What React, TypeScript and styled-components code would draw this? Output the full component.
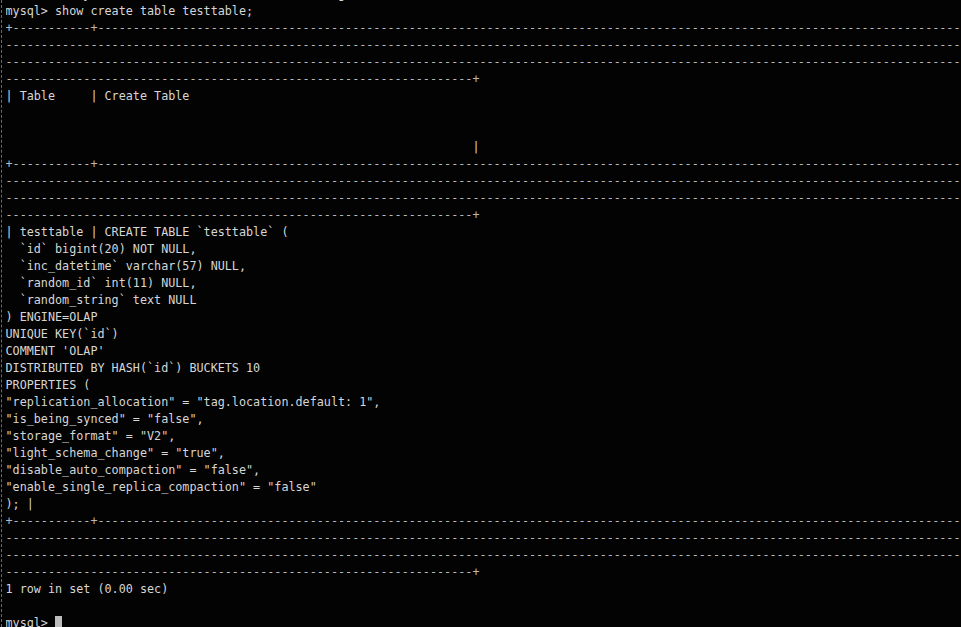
import React from "react";
import styled, { createGlobalStyle } from "styled-components";

const Global = createGlobalStyle`
  html, body {
    margin: 0;
    padding: 0;
    background: #030303;
    overflow: hidden;
  }
  #root {
    width: 961px;
    height: 627px;
    overflow: hidden;
  }
`;

const Screen = styled.div`
  width: 961px;
  height: 627px;
  overflow: hidden;
  background: #030303;
  box-sizing: border-box;
`;

const Frame = styled.div`
  margin-left: 1px;
  border-left: 1px dashed #6a6a6a;
  padding-left: 3.5px;
  height: 100%;
  overflow: hidden;
`;

const Output = styled.pre`
  margin: -14.5px 0 0 0;
  font-family: "DejaVu Sans Mono", "Liberation Mono", monospace;
  font-size: 11.75px;
  line-height: 17.03px;
  color: #d6d6d6;
  white-space: pre;
  overflow: hidden;
`;

const Line = styled.div<{ $dim?: boolean }>`
  height: 17.03px;
  white-space: pre;
  overflow: hidden;
  color: ${(p) => (p.$dim ? "#b9b9b9" : "#d6d6d6")};
`;

const Cursor = styled.span`
  display: inline-block;
  width: 7px;
  height: 14px;
  background: #bdbdbd;
  vertical-align: -3px;
`;

const FULL = "-".repeat(160);
const border = (): string[] => [
  "+-----------+" + "-".repeat(150),
  FULL,
  FULL,
  "-".repeat(66) + "+",
];

const createLines = [
  "| testtable | CREATE TABLE `testtable` (",
  "  `id` bigint(20) NOT NULL,",
  "  `inc_datetime` varchar(57) NULL,",
  "  `random_id` int(11) NULL,",
  "  `random_string` text NULL",
  ") ENGINE=OLAP",
  "UNIQUE KEY(`id`)",
  "COMMENT 'OLAP'",
  "DISTRIBUTED BY HASH(`id`) BUCKETS 10",
  "PROPERTIES (",
  '"replication_allocation" = "tag.location.default: 1",',
  '"is_being_synced" = "false",',
  '"storage_format" = "V2",',
  '"light_schema_change" = "true",',
  '"disable_auto_compaction" = "false",',
  '"enable_single_replica_compaction" = "false"',
  "); |",
];

const lines: { text: string; dim?: boolean }[] = [
  { text: "           y,                   ,              g" },
  { text: "mysql> show create table testtable;" },
  ...border().map((t) => ({ text: t, dim: true })),
  { text: "| Table     | Create Table" },
  { text: "" },
  { text: "" },
  { text: " ".repeat(66) + "|" },
  ...border().map((t) => ({ text: t, dim: true })),
  ...createLines.map((t) => ({ text: t })),
  ...border().map((t) => ({ text: t, dim: true })),
  { text: "1 row in set (0.00 sec)" },
  { text: "" },
];

export default function App() {
  return (
    <Screen>
      <Global />
      <Frame>
        <Output>
          {lines.map((l, i) => (
            <Line key={i} $dim={l.dim}>
              {l.text === "" ? " " : l.text}
            </Line>
          ))}
          <Line>
            {"mysql> "}
            <Cursor />
          </Line>
        </Output>
      </Frame>
    </Screen>
  );
}
